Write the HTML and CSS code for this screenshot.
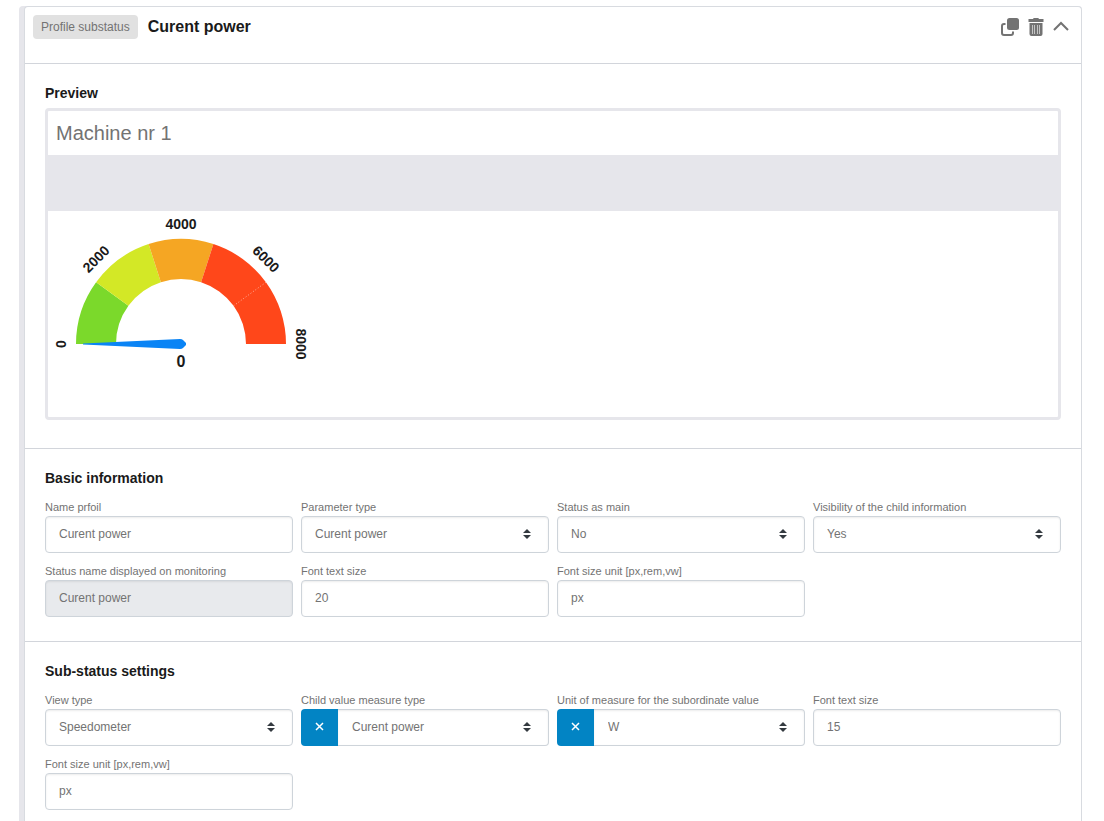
FILE: index.html
```html
<!DOCTYPE html>
<html lang="en">
<head>
  <meta charset="UTF-8">
  <meta name="viewport" content="width=device-width, initial-scale=1.0">
  <title>Curent power</title>
  <link rel="stylesheet" href="styles.css">
</head>
<body>
  <div class="profile">
    <div class="card">
      <header class="card-header">
        <span class="badge">Profile substatus</span>
        <h1>Curent power</h1>
        <div class="actions">
          <button type="button" aria-label="Copy">
            <svg width="18" height="18" viewBox="0 0 18 18">
              <rect x="6" y="0" width="12" height="12" rx="2.5" fill="#737373"/>
              <path d="M4.500 6H3a2 2 0 0 0-2 2v7a2 2 0 0 0 2 2h7a2 2 0 0 0 2-2v-1.500" fill="none" stroke="#737373" stroke-width="2"/>
            </svg>
          </button>
          <button type="button" aria-label="Delete">
            <svg width="16" height="18" viewBox="0 0 16 18">
              <path d="M0.500 1H5l.7-1h4.600l.7 1h4.500v3H.500z" fill="#737373"/>
              <path d="M1.500 5h13v11a2 2 0 0 1-2 2h-9a2 2 0 0 1-2-2z" fill="#737373"/>
              <path d="M4.500 7v9M6.500 7v9M9.500 7v9M11.500 7v9" stroke="#c4c4c4" stroke-width="1"/>
            </svg>
          </button>
          <button type="button" aria-label="Collapse">
            <svg width="16" height="18" viewBox="0 0 16 18">
              <path d="M1 12l7-7 7 7" fill="none" stroke="#737373" stroke-width="2"/>
            </svg>
          </button>
        </div>
      </header>

      <section class="section">
        <h2 class="preview-title">Preview</h2>
        <div class="preview">
          <div class="preview-name">Machine nr 1</div>
          <div class="preview-band"></div>
          <div class="preview-body">
            <svg class="gauge" width="266" height="168" viewBox="-133 -133 266 168">
              <path fill="#7bd92b" d="M-105 0A105 105 0 0 1-84.900-61.700L-52.600-38.200A65 65 0 0 0-65 0z"/>
              <path fill="#d3e826" d="M-84.900-61.700A105 105 0 0 1-32.400-99.900L-20.100-61.800A65 65 0 0 0-52.600-38.200z"/>
              <path fill="#f5a623" d="M-32.400-99.900A105 105 0 0 1 32.400-99.900L20.100-61.800A65 65 0 0 0-20.100-61.800z"/>
              <path fill="#ff471a" d="M32.400-99.900A105 105 0 0 1 105 0H65A65 65 0 0 0 20.100-61.800z"/>
              <path d="M84.900-61.700L52.600-38.200" stroke="#ffb09c" stroke-width="1" stroke-dasharray="1 2"/>
              <path fill="#0a84f5" d="M-98-.500L-1-5Q1-5 2-4L5-1V1L2 4Q1 5-1 5L-98 .500z"/>
              <text transform="translate(-120 0) rotate(-90)" y="5">0</text>
              <text transform="translate(-85 -85) rotate(-45)" y="5">2000</text>
              <text x="0" y="-115">4000</text>
              <text transform="translate(85 -85) rotate(45)" y="5">6000</text>
              <text transform="translate(120 0) rotate(90)" y="5">8000</text>
              <text class="gauge-value" x="0" y="23">0</text>
            </svg>
          </div>
        </div>
      </section>

      <section class="section">
        <h2>Basic information</h2>
        <div class="fields">
          <div class="field">
            <label for="profileName">Name prfoil</label>
            <input type="text" id="profileName" value="Curent power">
          </div>
          <div class="field">
            <label for="paramType">Parameter type</label>
            <select id="paramType"><option>Curent power</option></select>
          </div>
          <div class="field">
            <label for="statusMain">Status as main</label>
            <select id="statusMain"><option>No</option><option>Yes</option></select>
          </div>
          <div class="field">
            <label for="childVisible">Visibility of the child information</label>
            <select id="childVisible"><option>Yes</option><option>No</option></select>
          </div>
          <div class="field">
            <label for="statusName">Status name displayed on monitoring</label>
            <input type="text" id="statusName" value="Curent power" readonly>
          </div>
          <div class="field">
            <label for="fontSize">Font text size</label>
            <input type="text" id="fontSize" value="20">
          </div>
          <div class="field">
            <label for="fontUnit">Font size unit [px,rem,vw]</label>
            <input type="text" id="fontUnit" value="px">
          </div>
        </div>
      </section>

      <section class="section">
        <h2>Sub-status settings</h2>
        <div class="fields">
          <div class="field">
            <label for="viewType">View type</label>
            <select id="viewType"><option>Speedometer</option></select>
          </div>
          <div class="field">
            <label for="childType">Child value measure type</label>
            <div class="input-group">
              <button type="button" class="clear" aria-label="Clear">
                <svg width="9" height="9" viewBox="0 0 9 9"><path d="M1 1l7 7M8 1l-7 7" stroke="#fff" stroke-width="1.500"/></svg>
              </button>
              <select id="childType"><option>Curent power</option></select>
            </div>
          </div>
          <div class="field">
            <label for="childUnit">Unit of measure for the subordinate value</label>
            <div class="input-group">
              <button type="button" class="clear" aria-label="Clear">
                <svg width="9" height="9" viewBox="0 0 9 9"><path d="M1 1l7 7M8 1l-7 7" stroke="#fff" stroke-width="1.500"/></svg>
              </button>
              <select id="childUnit"><option>W</option></select>
            </div>
          </div>
          <div class="field">
            <label for="subFontSize">Font text size</label>
            <input type="text" id="subFontSize" value="15">
          </div>
          <div class="field">
            <label for="subFontUnit">Font size unit [px,rem,vw]</label>
            <input type="text" id="subFontUnit" value="px">
          </div>
        </div>
      </section>
    </div>
  </div>
</body>
</html>
```

FILE: styles.css
```css
* { box-sizing: border-box; }
body { display: flex; min-height: 100vh; margin: 0; padding: 6px 22px 0 19px; background: #fff; color: #737373; font-family: "Liberation Sans", Arial, sans-serif; font-size: 12px; }
h1, h2 { margin: 0; color: #1a1a1a; font-weight: bold; }
h1 { font-size: 16px; line-height: 22px; }
h2 { margin-bottom: 11px; font-size: 14px; line-height: 20px; }
button { padding: 0; border: 0; background: none; cursor: pointer; }
svg { display: block; }

.profile { display: flex; flex: 1; min-width: 0; padding-left: 5px; background: #e6e6eb; border-radius: 4px 4px 0 0; }
.card { flex: 1; min-width: 0; background: #fff; border: 1px solid #d8dbe0; border-bottom: 0; border-radius: 4px 4px 0 0; }
.card-header { display: flex; align-items: center; gap: 10px; padding: 8px 12px 24px 8px; }
.badge { padding: 0 8px; background: #e1e1e1; border-radius: 4px; line-height: 24px; }
.actions { display: flex; gap: 9px; margin-left: auto; }

.section { padding: 19px 20px 24px; border-top: 1px solid #d2d5db; }
.section:last-child { padding-bottom: 10px; }

.preview-title { margin-bottom: 5px; }
.preview { margin-bottom: 4px; border: 3px solid #e6e6eb; border-radius: 4px; }
.preview-name { padding: 0 8px; font-size: 20px; line-height: 44px; }
.preview-band { height: 56px; background: #e6e6eb; }
.preview-body { min-height: 206px; }
.gauge text { fill: #1a1a1a; font-size: 14px; font-weight: bold; text-anchor: middle; }
.gauge .gauge-value { font-size: 16px; }

.fields { display: grid; grid-template-columns: repeat(4, minmax(0, 1fr)); gap: 10px 8px; }
.field label { display: block; font-size: 11px; line-height: 17px; white-space: nowrap; }
input, select { display: block; width: 100%; height: 37px; padding: 0 13px 2px; border: 1px solid #ced4da; border-radius: 4px; background: #fff; box-shadow: inset 0 1px 2px rgba(0, 0, 0, 0.08); color: #737373; font-family: inherit; font-size: 12px; }
input[readonly] { background: #e8eaed; }
select { appearance: none; background: #fff url("data:image/svg+xml,%3Csvg xmlns='http://www.w3.org/2000/svg' viewBox='0 0 8 10'%3E%3Cpath fill='%23343a40' d='M4 0L0 4h8zM4 10L0 6h8z'/%3E%3C/svg%3E") no-repeat right 17px top 12px / 8px 10px; }

.input-group { display: flex; }
.input-group select { flex: 1; min-width: 0; border-left: 0; border-radius: 0 4px 4px 0; padding-left: 14px; }
.clear { display: flex; flex: 0 0 37px; align-items: center; justify-content: center; padding-bottom: 2px; background: #0284c4; border-radius: 4px 0 0 4px; }
```
